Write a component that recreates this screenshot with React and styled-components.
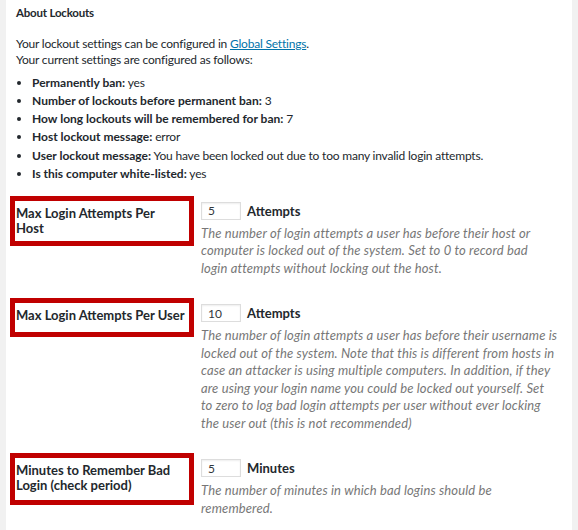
import React from "react"
import styled, { createGlobalStyle } from "styled-components"

const GlobalStyle = createGlobalStyle`
  html, body {
    margin: 0;
    padding: 0;
    background: #f1f1f1;
  }
  body {
    font-family: Lato, "Noto Sans", sans-serif;
    font-size: 13px;
    color: #23282d;
  }
`

const summary = [
  { name: "Permanently ban:", value: "yes" },
  { name: "Number of lockouts before permanent ban:", value: "3" },
  { name: "How long lockouts will be remembered for ban:", value: "7" },
  { name: "Host lockout message:", value: "error" },
  {
    name: "User lockout message:",
    value: "You have been locked out due to too many invalid login attempts.",
  },
  { name: "Is this computer white-listed:", value: "yes" },
]

const settings = [
  {
    label: ["Max Login Attempts Per", "Host"],
    height: 50,
    value: "5",
    unit: "Attempts",
    desc: [
      "The number of login attempts a user has before their host or",
      "computer is locked out of the system. Set to 0 to record bad",
      "login attempts without locking out the host.",
    ],
  },
  {
    label: ["Max Login Attempts Per User"],
    height: 39,
    value: "10",
    unit: "Attempts",
    desc: [
      "The number of login attempts a user has before their username is",
      "locked out of the system. Note that this is different from hosts in",
      "case an attacker is using multiple computers. In addition, if they",
      "are using your login name you could be locked out yourself. Set",
      "to zero to log bad login attempts per user without ever locking",
      "the user out (this is not recommended)",
    ],
  },
  {
    label: ["Minutes to Remember Bad", "Login (check period)"],
    height: 52,
    value: "5",
    unit: "Minutes",
    desc: [
      "The number of minutes in which bad logins should be",
      "remembered.",
    ],
  },
]

const Page = styled.div`
  width: 566px;
  margin: 0 6px;
  min-height: 530px;
  background: #fff;
  padding: 4px 0 0;
  box-sizing: border-box;
`

const Intro = styled.div`
  padding: 0 10px;
  font-size: 12px;
  letter-spacing: -0.2px;
`

const Heading = styled.h3`
  margin: 0;
  font-size: 11.5px;
  font-weight: 700;
  line-height: 18px;
  letter-spacing: -0.2px;
`

const Para = styled.p`
  margin: 14px 0 0;
  line-height: 15.6px;
`

const Link = styled.a`
  color: #0073aa;
  text-decoration: underline;
`

const Summary = styled.ul`
  margin: 7px 0 0;
  padding: 0 0 0 16px;
  list-style: disc;
`

const SummaryItem = styled.li`
  line-height: 18.1px;
  white-space: nowrap;

  b {
    font-weight: 700;
    letter-spacing: 0;
  }
`

const Table = styled.div`
  margin-top: 13px;
  display: flex;
  flex-direction: column;
  gap: 21px;
`

const Row = styled.div`
  display: grid;
  grid-template-columns: 184px 1fr;
  column-gap: 7px;
  padding-left: 4px;
`

const Label = styled.div`
  height: ${(p) => p.$h}px;
  box-sizing: border-box;
  border: 5px solid #c00000;
  padding: 5px 0 0 1px;
  font-weight: 700;
  line-height: 15px;
  white-space: nowrap;
`

const Field = styled.div`
  padding-top: 6px;
`

const InputLine = styled.div`
  display: flex;
  align-items: center;
  gap: 6px;
  font-weight: 700;
`

const NumberInput = styled.input`
  width: 40px;
  height: 18px;
  box-sizing: border-box;
  border: 1px solid #ddd;
  box-shadow: inset 0 1px 2px rgba(0, 0, 0, 0.07);
  padding: 0 6px;
  font-family: inherit;
  font-size: 12px;
  color: #32373c;
  outline: none;
`

const Desc = styled.p`
  margin: 5px 0 0;
  font-style: italic;
  color: #777;
  line-height: 17.5px;
  letter-spacing: 0.13px;
  white-space: nowrap;
`

export default function App() {
  return (
    <>
      <GlobalStyle />
      <Page>
        <Intro>
          <Heading>About Lockouts</Heading>
          <Para>
            Your lockout settings can be configured in{" "}
            <Link href="#">Global Settings</Link>.
            <br />
            Your current settings are configured as follows:
          </Para>
          <Summary>
            {summary.map(({ name, value }) => (
              <SummaryItem key={name}>
                <b>{name}</b> {value}
              </SummaryItem>
            ))}
          </Summary>
        </Intro>
        <Table>
          {settings.map((s, i) => (
            <Row key={i}>
              <Label $h={s.height}>
                {s.label.map((l, j) => (
                  <React.Fragment key={j}>
                    {j > 0 && <br />}
                    {l}
                  </React.Fragment>
                ))}
              </Label>
              <Field>
                <InputLine>
                  <NumberInput type="text" defaultValue={s.value} />
                  {s.unit}
                </InputLine>
                <Desc>
                  {s.desc.map((d, j) => (
                    <React.Fragment key={j}>
                      {j > 0 && <br />}
                      {d}
                    </React.Fragment>
                  ))}
                </Desc>
              </Field>
            </Row>
          ))}
        </Table>
      </Page>
    </>
  )
}
